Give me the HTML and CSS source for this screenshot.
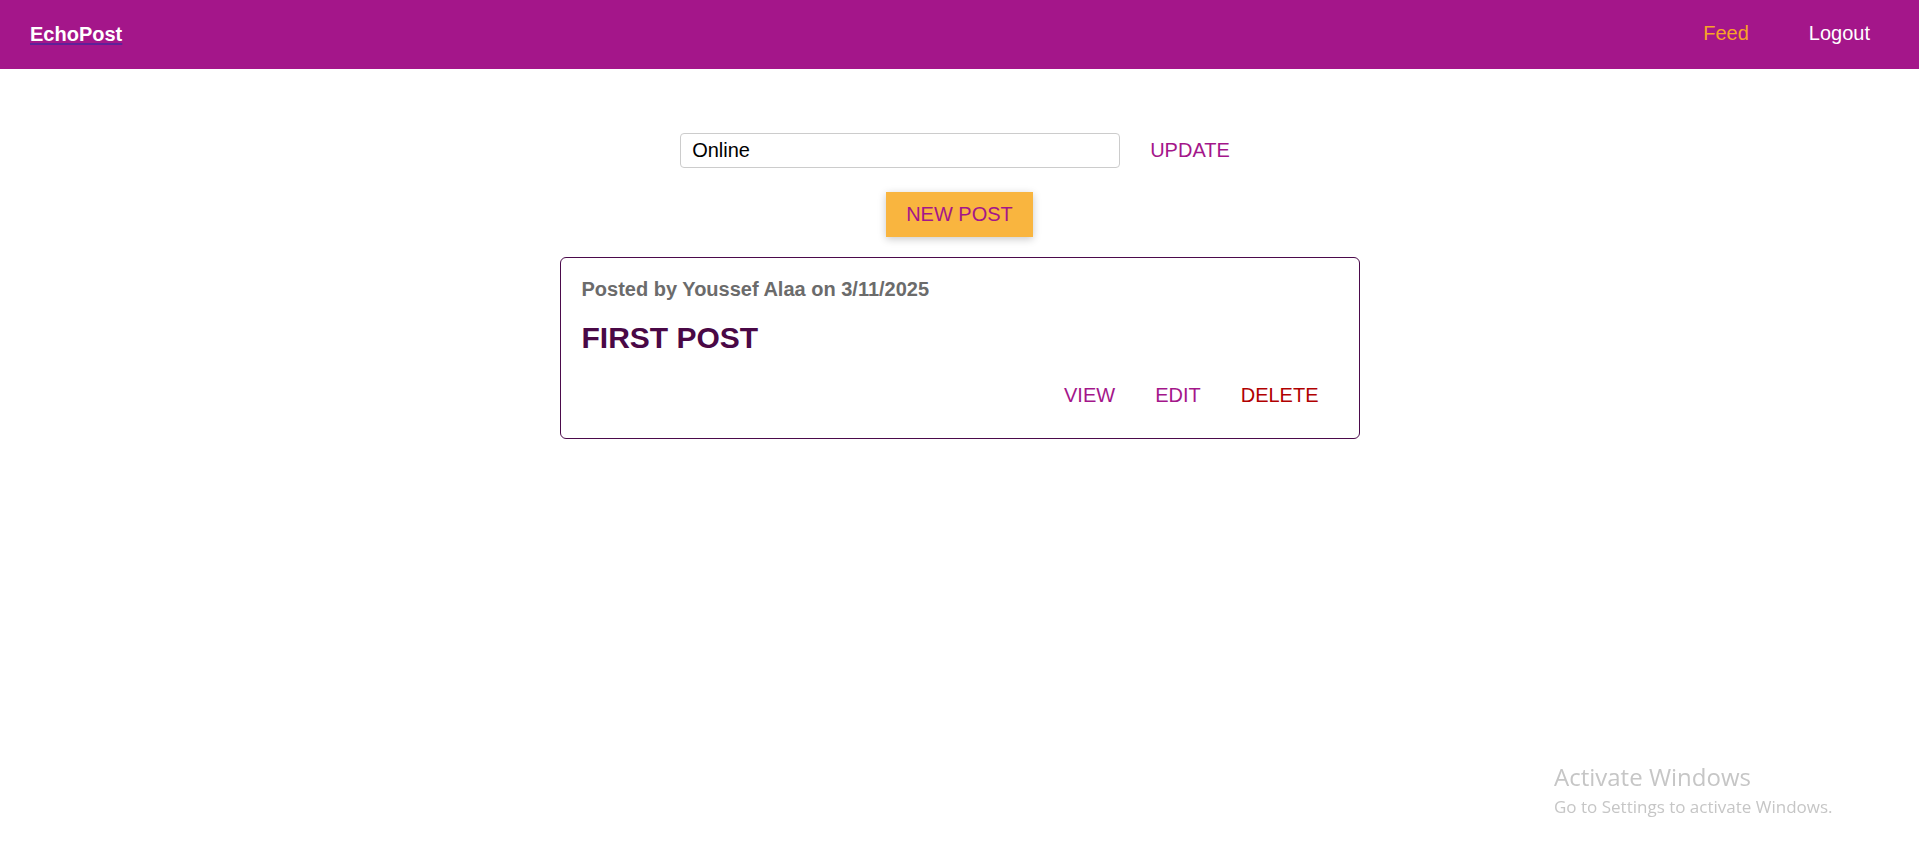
FILE: index.html
```html
<!DOCTYPE html>
<html lang="en">
<head>
<meta charset="utf-8">
<title>EchoPost</title>
<link rel="stylesheet" href="styles.css">
</head>
<body>
<header class="topbar">
  <a class="brand" href="#">EchoPost</a>
  <nav class="nav">
    <a class="nav-link nav-link--active" href="#">Feed</a>
    <a class="nav-link" href="#">Logout</a>
  </nav>
</header>
<main class="feed">
  <form class="status-row">
    <input class="status-input" type="text" value="Online">
    <button class="text-btn" type="button">UPDATE</button>
  </form>
  <div class="new-post-row">
    <button class="new-post-btn" type="button">NEW POST</button>
  </div>
  <article class="post">
    <p class="post-meta">Posted by Youssef Alaa on 3/11/2025</p>
    <h2 class="post-title">FIRST POST</h2>
    <div class="post-actions">
      <button class="text-btn" type="button">VIEW</button>
      <button class="text-btn" type="button">EDIT</button>
      <button class="text-btn text-btn--danger" type="button">DELETE</button>
    </div>
  </article>
</main>
<div class="watermark">
  <div class="watermark-title">Activate Windows</div>
  <div class="watermark-sub">Go to Settings to activate Windows.</div>
</div>
</body>
</html>
```

FILE: styles.css
```css
* { box-sizing: border-box; }

body {
  margin: 0;
  font-family: "Liberation Sans", Arial, sans-serif;
  background: #ffffff;
  color: #000;
}

.topbar {
  height: 69px;
  background: #a4168a;
  display: flex;
  align-items: center;
  justify-content: space-between;
  padding: 0 29px 0 30px;
}

.brand {
  color: #ffffff;
  font-size: 20px;
  font-weight: bold;
  text-decoration: underline;
  text-decoration-color: #5e2199;
  text-decoration-thickness: 2px;
  text-underline-offset: 2px;
}

.nav {
  display: flex;
  gap: 20px;
}

.nav-link {
  color: #ffffff;
  font-size: 20px;
  text-decoration: none;
  padding: 9px 20px 11px;
}

.nav-link--active { color: #f8a326; }

.feed {
  display: flex;
  flex-direction: column;
  align-items: center;
  padding-top: 64px;
}

.status-row {
  display: flex;
  align-items: center;
  margin: 0 0 0 1px;
}

.status-input {
  width: 440px;
  height: 35px;
  border: 1px solid #cccccc;
  border-radius: 4px;
  padding: 0 11px;
  font-family: "Liberation Sans", Arial, sans-serif;
  font-size: 20px;
  color: #000;
  margin-right: 20px;
}

.text-btn {
  background: none;
  border: none;
  color: #a4168a;
  font-family: "Liberation Sans", Arial, sans-serif;
  font-size: 20px;
  padding: 10px 20px;
  cursor: pointer;
}

.status-row .text-btn { padding: 6px 10px; }

.text-btn--danger { color: #b10000; }

.new-post-row {
  margin-top: 24px;
}

.new-post-btn {
  background: #f9b53f;
  color: #a4168a;
  border: none;
  font-family: "Liberation Sans", Arial, sans-serif;
  font-size: 20px;
  padding: 11px 20px;
  box-shadow: 0 2px 8px rgba(0, 0, 0, 0.22);
  cursor: pointer;
}

.post {
  width: 800px;
  margin-top: 20px;
  border: 1px solid #4b0a4b;
  border-radius: 6px;
  padding: 20px 20px 21px 21px;
}

.post-meta {
  margin: 0 0 20px;
  font-size: 20px;
  font-weight: bold;
  color: #6b6b6b;
}

.post-title {
  margin: 0 0 19px;
  font-size: 30px;
  font-weight: bold;
  color: #4a0846;
}

.post-actions {
  display: flex;
  justify-content: flex-end;
}

.watermark {
  position: fixed;
  left: 1554px;
  top: 762px;
  font-family: "Open Sans", "Noto Sans", sans-serif;
  color: #c6c6c6;
}

.watermark-title { font-size: 24px; line-height: 30px; }
.watermark-sub { font-size: 17px; line-height: 30px; }
```
